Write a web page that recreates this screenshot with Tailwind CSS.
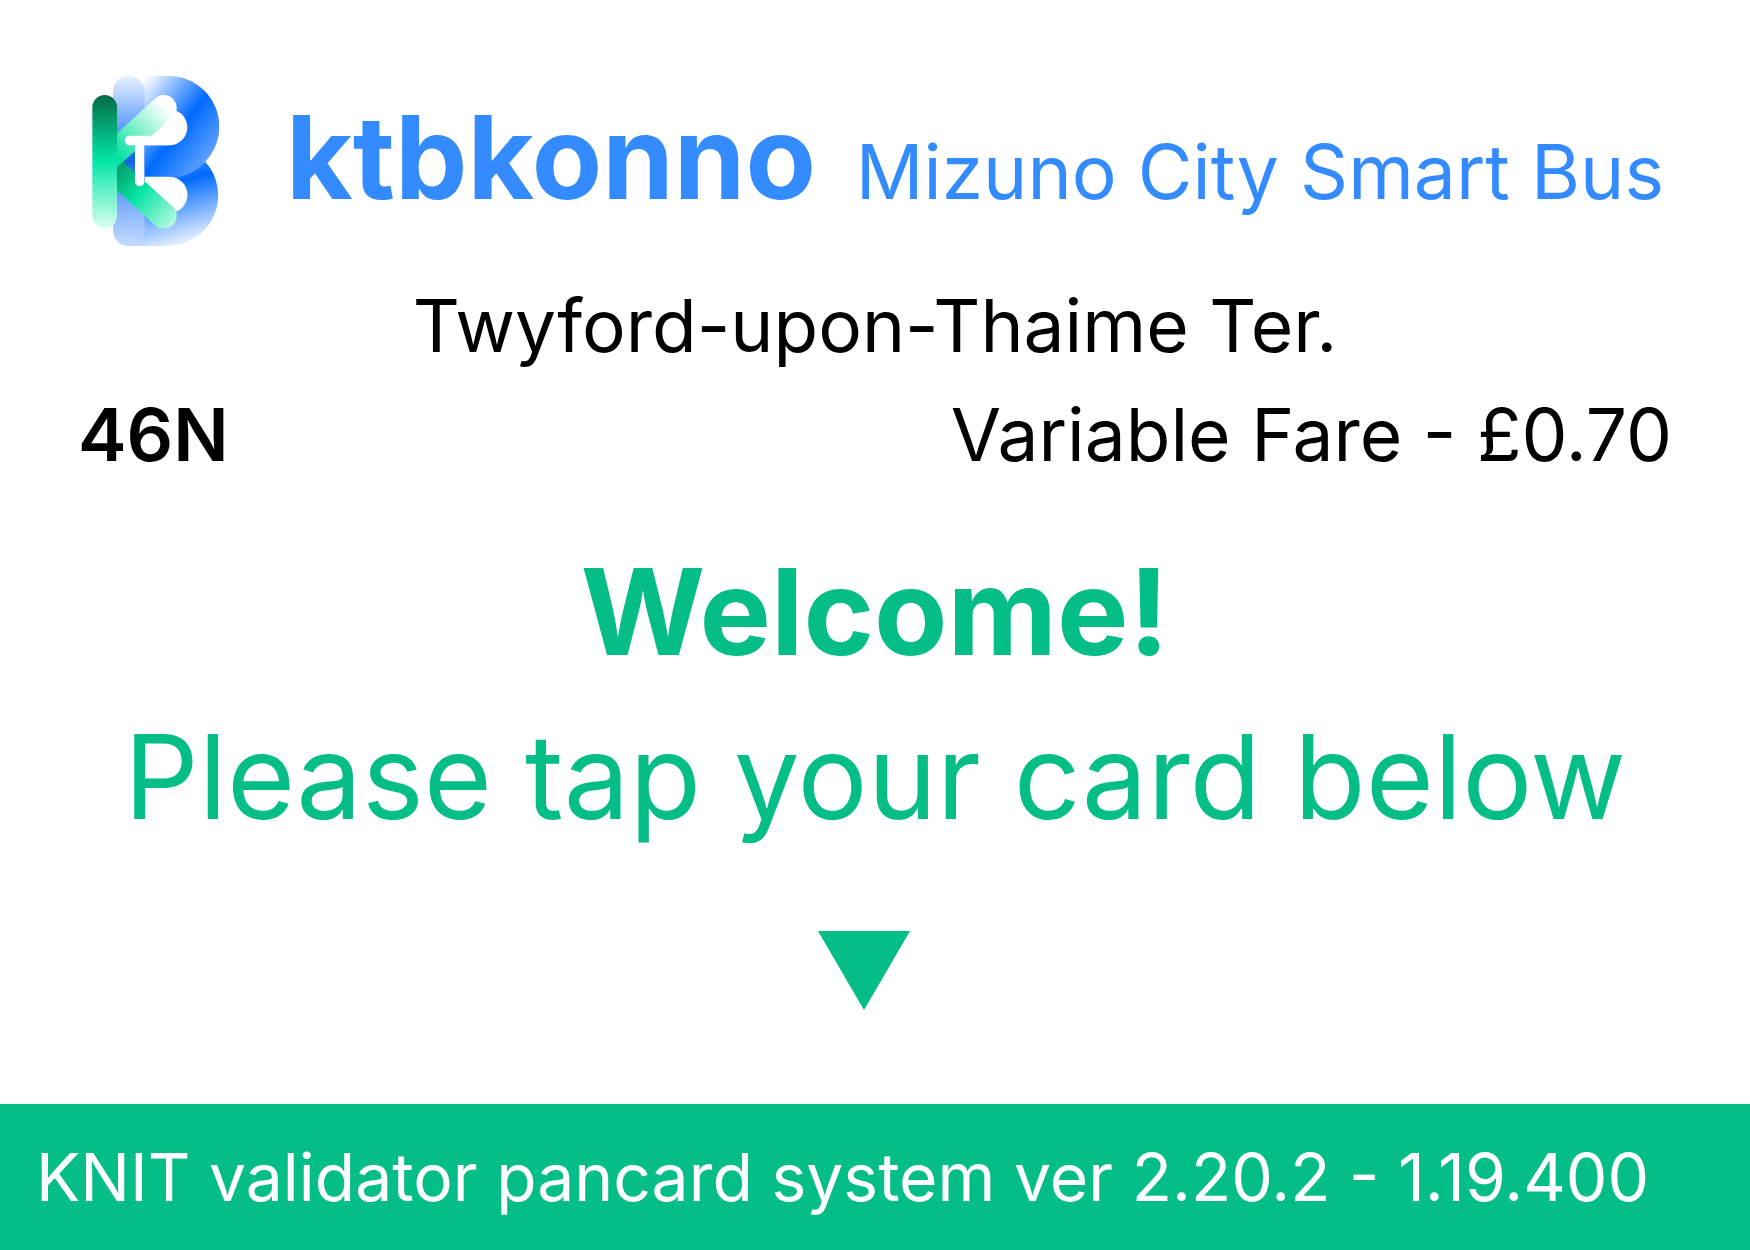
<!DOCTYPE html>
<html lang="en">
<head>
<meta charset="utf-8">
<meta name="viewport" content="width=device-width, initial-scale=1">
<title>ktbkonno – Mizuno City Smart Bus</title>
<script src="https://cdn.jsdelivr.net/npm/@tailwindcss/browser@4"></script>
</head>
<body class="flex min-h-screen flex-col bg-white font-['Inter',sans-serif] text-black">
  <header class="flex items-center pt-[76px] pr-[86px] pl-[92px] text-[#338bff]">
    <svg class="h-[170px] w-[127px] shrink-0" viewBox="36 33 381 510" role="img" aria-label="ktbkonno logo">
      <defs>
        <linearGradient id="bowlTop" gradientUnits="userSpaceOnUse" x1="190" y1="40" x2="428" y2="222">
          <stop offset="0" stop-color="#fff"/><stop offset=".08" stop-color="#e4eefe"/><stop offset=".6" stop-color="#006aff"/><stop offset="1" stop-color="#5aa0ff"/>
        </linearGradient>
        <linearGradient id="bowlBottom" gradientUnits="userSpaceOnUse" x1="272" y1="290" x2="345" y2="545">
          <stop offset="0" stop-color="#4a94ff"/><stop offset=".24" stop-color="#006aff"/><stop offset="1" stop-color="#fff"/>
        </linearGradient>
        <linearGradient id="spine" gradientUnits="userSpaceOnUse" x1="0" y1="33" x2="0" y2="543">
          <stop offset="0" stop-color="#e8f1fe"/><stop offset=".3" stop-color="#5f9dfc"/><stop offset=".5" stop-color="#0f62e8"/><stop offset=".68" stop-color="#649fff"/><stop offset="1" stop-color="#c6dcff"/>
        </linearGradient>
        <linearGradient id="stem" x1="0" y1="0" x2="0" y2="1">
          <stop offset="0" stop-color="#056b47"/><stop offset=".5" stop-color="#05e8a8"/><stop offset="1" stop-color="#dcfdf1"/>
        </linearGradient>
        <linearGradient id="armUp" gradientUnits="userSpaceOnUse" x1="105" y1="262" x2="272" y2="112">
          <stop offset="0" stop-color="#0ae0a2"/><stop offset=".45" stop-color="#84f1cf"/><stop offset=".9" stop-color="#fff"/>
        </linearGradient>
        <linearGradient id="armDown" gradientUnits="userSpaceOnUse" x1="111" y1="325" x2="280" y2="478">
          <stop offset="0" stop-color="#08a36e"/><stop offset=".4" stop-color="#05e5a5"/><stop offset="1" stop-color="#b4f9df"/>
        </linearGradient>
        <clipPath id="rightOfStem"><path d="M111 33H417V543H111Z"/></clipPath>
      </defs>
      <path fill="url(#bowlBottom)" d="M147 280H367L376 290A152 152 0 0 1 265 543H147Z"/>
      <path fill="url(#bowlTop)" d="M147 33H265A152 152 0 0 1 376 290Q345 324 300 335H147Z"/>
      <path fill="#fff" d="M193 133H268A54 54 0 0 1 268 241H193Z"/>
      <path fill="#fff" d="M193 335H268A54 54 0 0 1 268 444H193Z"/>
      <rect x="99" y="33" width="95" height="510" rx="47" fill="url(#spine)"/>
      <g clip-path="url(#rightOfStem)" stroke-width="76" stroke-linecap="round">
        <path stroke="url(#armDown)" d="M90 306 252 453"/>
        <path stroke="url(#armUp)" d="M90 275 252 128"/>
      </g>
      <path fill="#fff" d="M149 212H268V241H193V350A14 14 0 0 1 165 350V241H149A14 14 0 0 1 149 212Z"/>
      <rect x="37" y="90" width="74" height="400" rx="37" fill="url(#stem)"/>
    </svg>
    <div class="ml-[67px] flex flex-1 items-baseline justify-between pb-1.5 whitespace-nowrap">
      <h1 class="text-[115px] leading-[120px] font-bold">ktbkonno</h1>
      <p class="text-[75px] leading-[80px]">Mizuno City Smart Bus</p>
    </div>
  </header>

  <section class="mt-9 flex flex-col gap-[21px] px-[78px] text-[73px] leading-[88px] whitespace-nowrap">
    <p class="text-center">Twyford-upon-Thaime Ter.</p>
    <div class="flex justify-between">
      <p class="font-semibold">46N</p>
      <p>Variable Fare - £0.70</p>
    </div>
  </section>

  <main class="mt-[61px] flex flex-1 flex-col items-center gap-[21px] leading-[144px] whitespace-nowrap text-[#05bd87]">
    <h2 class="text-[120px] font-bold">Welcome!</h2>
    <p class="text-[117px]">Please tap your card below</p>
    <svg class="mt-[61px] mr-[22px] h-[79px] w-[92px]" viewBox="0 0 92 79" fill="currentColor" aria-hidden="true"><path d="M0 0H92L46 79Z"/></svg>
  </main>

  <footer class="bg-[#05bd87] py-[33px] pl-9 text-[66px] leading-[80px] whitespace-nowrap text-white">
    <p>KNIT validator pancard system ver 2.20.2 - 1.19.400</p>
  </footer>
</body>
</html>
